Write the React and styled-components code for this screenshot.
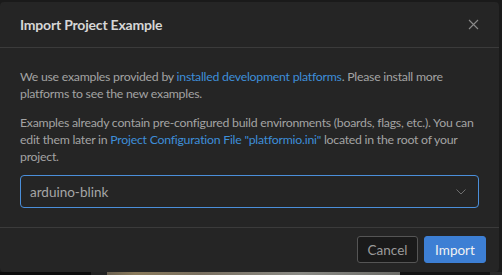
import React from "react";
import styled, { createGlobalStyle } from "styled-components";

const Global = createGlobalStyle`
  html, body { margin: 0; padding: 0; background: #1a1a1a; }
  body { font-family: Lato, "Noto Sans", sans-serif; }
`;

const Page = styled.div`
  width: 502px;
  height: 275px;
  overflow: hidden;
  display: flex;
  flex-direction: column;
  background: #1a1a1a;
`;

const Dialog = styled.div`
  margin-top: 2px;
  width: 499px;
  height: 270px;
  flex: none;
  background: #252525;
  border-radius: 4px;
  display: flex;
  flex-direction: column;
  box-sizing: border-box;
`;

const Header = styled.div`
  height: 45px;
  padding: 0 20px;
  display: flex;
  align-items: center;
  justify-content: space-between;
  border-bottom: 1px solid #3b3b3b;
  flex: none;
`;

const Title = styled.h1`
  margin: 0;
  font-size: 14px;
  font-weight: 700;
  letter-spacing: -0.2px;
  color: #d6d6d6;
`;

const Close = styled.button`
  border: 0;
  background: none;
  padding: 0;
  width: 12px;
  height: 12px;
  display: flex;
  align-items: center;
  justify-content: center;
  cursor: pointer;
`;

const Body = styled.div`
  padding: 20px 20px 19px 20px;
  border-bottom: 1px solid #3b3b3b;
  display: flex;
  flex-direction: column;
`;

const Para = styled.p`
  margin: 0 0 12px 0;
  font-size: 12.3px;
  letter-spacing: -0.25px;
  line-height: 17px;
  color: #a3a3a3;
  &:last-of-type { margin-bottom: 10px; }
`;

const Link = styled.a`
  color: #3e8ed9;
  text-decoration: none;
`;

const Select = styled.div`
  height: 33px;
  box-sizing: border-box;
  border: 1px solid #4b8fda;
  border-radius: 4px;
  display: flex;
  align-items: center;
  justify-content: space-between;
  padding: 0 12px 0 9px;
  font-size: 13.5px;
  color: #a6a6a6;
`;

const Footer = styled.div`
  flex: 1;
  display: flex;
  justify-content: flex-end;
  align-items: flex-start;
  gap: 6px;
  padding: 8px 13px 0 0;
`;

const Button = styled.button`
  height: 27px;
  box-sizing: border-box;
  border-radius: 3px;
  font-family: inherit;
  font-size: 13.5px;
  padding: 0;
  width: ${p => (p.$primary ? "62px" : "61px")};
  background: ${p => (p.$primary ? "#3d7fd4" : "#1a1a1a")};
  border: 1px solid ${p => (p.$primary ? "#3d7fd4" : "#555")};
  color: ${p => (p.$primary ? "#f2f2f2" : "#9a9a9a")};
  cursor: pointer;
`;

const Strip = styled.div`
  flex: 1;
  background: linear-gradient(
    to right,
    #0c0c0c 0px, #0c0c0c 91px,
    #222 91px, #222 107px,
    #6a6050 107px, #8a7a5a 135px, #7a7060 200px, #8b8b86 300px, #6a6a66 400px,
    #141414 400px, #141414 490px, #2a2a2a 490px
  );
`;

const XIcon = () => (
  <svg width="11" height="11" viewBox="0 0 11 11">
    <path d="M1 1 L10 10 M10 1 L1 10" stroke="#8a8a8a" strokeWidth="1.1" fill="none" />
  </svg>
);

const Chevron = () => (
  <svg width="10" height="6" viewBox="0 0 10 6">
    <path d="M0.5 0.5 L5 5 L9.5 0.5" stroke="#6f6f6f" strokeWidth="1" fill="none" />
  </svg>
);

export default function App() {
  return (
    <>
      <Global />
      <Page>
        <Dialog>
          <Header>
            <Title>Import Project Example</Title>
            <Close aria-label="Close"><XIcon /></Close>
          </Header>
          <Body>
            <Para>
              We use examples provided by <Link>installed development platforms</Link>. Please install more platforms to see the new examples.
            </Para>
            <Para>
              Examples already contain pre-configured build environments (boards, flags, etc.). You can edit them later in <Link>Project Configuration File "platformio.ini"</Link> located in the root of your project.
            </Para>
            <Select>
              <span>arduino-blink</span>
              <Chevron />
            </Select>
          </Body>
          <Footer>
            <Button>Cancel</Button>
            <Button $primary>Import</Button>
          </Footer>
        </Dialog>
        <Strip />
      </Page>
    </>
  );
}
